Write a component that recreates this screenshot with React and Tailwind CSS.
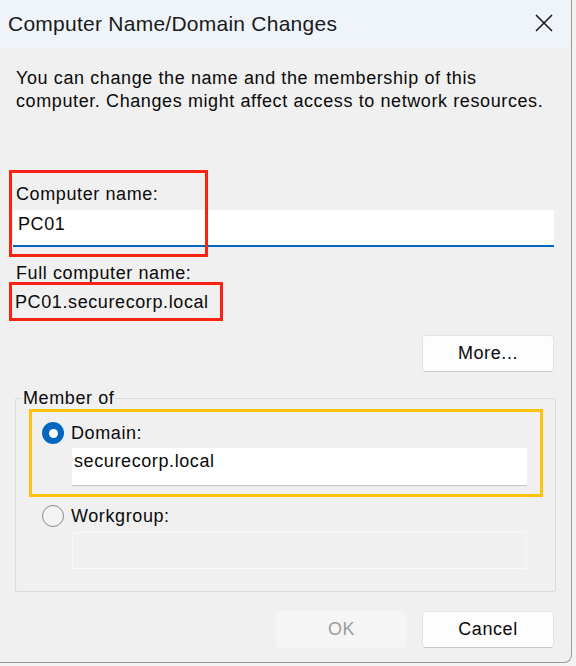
import React from 'react'

const font = { fontFamily: '"Liberation Sans", Arial, sans-serif' }

const Radio = ({ checked }) =>
  checked ? (
    <span className="flex h-[22px] w-[22px] items-center justify-center rounded-full bg-[#0067c0]">
      <span className="h-[9px] w-[9px] rounded-full bg-white" />
    </span>
  ) : (
    <span className="h-[22px] w-[22px] rounded-full border-[1.5px] border-[#8a8a8a] bg-[#f3f3f3]" />
  )

const Button = ({ children, disabled, className = '' }) => (
  <button
    className={
      'flex h-[37px] items-center justify-center rounded-[4px] text-[18px] tracking-[0.6px] ' +
      (disabled
        ? 'border border-[#f5f5f5] bg-[#f5f5f5] text-[#9d9d9d] '
        : 'border border-[#e3e3e3] border-b-[#c8c8c8] bg-[#fdfdfd] text-[#0a0a0a] ') +
      className
    }
  >
    {children}
  </button>
)

export default function App() {
  return (
    <div className="h-[666px] w-[576px] overflow-hidden bg-[#f3f3f3] text-[#0a0a0a]" style={font}>
      <div className="relative h-[663px] w-[572px] overflow-hidden rounded-br-[8px] border-r border-b border-[#9a9a9a] bg-[#f0f0f0]">
        {/* title bar */}
        <div className="flex h-[47px] items-center justify-between bg-[#eef4f9] pl-[8px] pr-[18px]">
          <span className="text-[21px] tracking-[0.25px] text-[#1a1a1a]">Computer Name/Domain Changes</span>
          <svg width="18" height="18" viewBox="0 0 18 18" className="mb-[2px]">
            <path d="M1 1L17 17M17 1L1 17" stroke="#111" strokeWidth="1.5" fill="none" />
          </svg>
        </div>

        <div className="px-[16px] text-[18px] tracking-[0.6px]">
          <p className="mt-[20px] leading-[23px]">
            You can change the name and the membership of this
            <br />
            computer. Changes might affect access to network resources.
          </p>

          <div className="mt-[70px] leading-[22px]">Computer name:</div>
          <div className="-ml-[3px] mt-[5px] flex h-[37px] w-[541px] items-center border-b-2 border-[#0067c0] bg-white pl-[5px] pb-[6px]">
            PC01
          </div>

          <div className="mt-[15px] leading-[22px]">Full computer name:</div>
          <div className="mt-[7px] -ml-[1px] leading-[22px]">PC01.securecorp.local</div>

          <div className="mt-[22px] flex justify-end pr-[1px]">
            <Button className="w-[132px]">More...</Button>
          </div>

          {/* Member of group */}
          <div className="relative mt-[26px] -ml-[1px] h-[194px] w-[541px] rounded-[2px] border border-[#dadada]">
            <span className="absolute -top-[12px] left-[6px] bg-[#f0f0f0] px-[1px] leading-[22px]">Member of</span>

            <div className="mt-[23px] flex items-center gap-[7px] pl-[26px]">
              <Radio checked />
              <span className="leading-[22px]">Domain:</span>
            </div>
            <div className="ml-[56px] mt-[4px] flex h-[37px] w-[455px] items-center bg-white pl-[2px] pb-[10px] shadow-[0_1px_0_#c4c4c4]">
              securecorp.local
            </div>

            <div className="mt-[20px] flex items-center gap-[7px] pl-[26px]">
              <Radio />
              <span className="leading-[22px]">Workgroup:</span>
            </div>
            <div className="ml-[56px] mt-[5px] h-[37px] w-[455px] border border-[#f8f8f8] bg-[#f0f0f0]" />
          </div>

          <div className="mt-[19px] flex justify-end gap-[15px] pr-[1px]">
            <Button disabled className="w-[131px]">OK</Button>
            <Button className="w-[132px]">Cancel</Button>
          </div>
        </div>

        {/* annotation highlights */}
        <div className="pointer-events-none absolute left-[9px] top-[170px] h-[87px] w-[199px] border-[3px] border-[#fa2311]" />
        <div className="pointer-events-none absolute left-[9px] top-[282px] h-[39px] w-[214px] border-[3px] border-[#fa2311]" />
        <div className="pointer-events-none absolute left-[29px] top-[409px] h-[88px] w-[514px] border-[3px] border-[#ffc20e]" />
      </div>
    </div>
  )
}
